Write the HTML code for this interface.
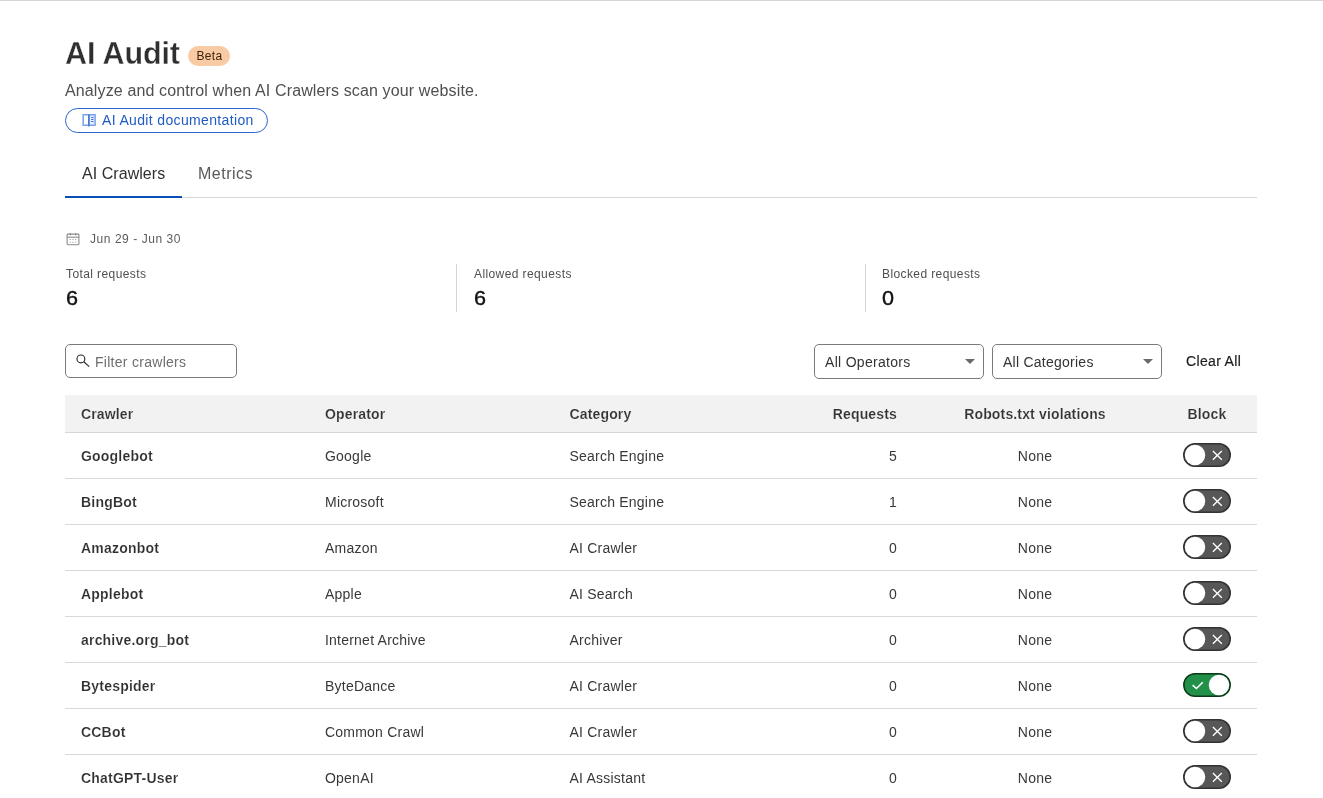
<!DOCTYPE html>
<html>
<head>
<meta charset="utf-8">
<style>
*{box-sizing:border-box;margin:0;padding:0}
html,body{width:1323px;height:798px;overflow:hidden;background:#fff}
body{font-family:"Liberation Sans",sans-serif;color:#313131;position:relative}
.a{position:absolute;white-space:nowrap}
#wrap{position:absolute;left:0;top:0;width:1323px;height:798px;will-change:transform}
.topline{position:absolute;left:0;top:0;width:1323px;height:1px;background:#d6d6d6}
.title{left:65px;top:34.5px;font-size:30.5px;font-weight:bold;color:#2f2f2f;line-height:37px;letter-spacing:-0.12px;-webkit-text-stroke:0.35px #fff}
.beta{left:188px;top:46px;width:42px;height:20px;border-radius:10px;background:#f8cba4;font-size:12px;color:#3f2306;text-align:center;line-height:20px;padding-left:1px;letter-spacing:0.3px}
.sub{left:65px;top:82px;font-size:16px;color:#4f4f4f;line-height:18px;letter-spacing:0.13px}
.docbtn{left:65px;top:108px;width:203px;height:25px;border:1px solid #2b66cf;border-radius:13px}
.doctxt{left:102px;top:112px;font-size:14px;color:#1f5bc6;line-height:16px;letter-spacing:0.35px}
.tabline{left:65px;top:197px;width:1192px;height:1px;background:#d9d9d9}
.tabul{left:65px;top:196px;width:117px;height:2px;background:#0a4fb4}
.tab{top:165px;font-size:16px;line-height:18px}
.date{left:90px;top:232px;font-size:12px;color:#5c5c5c;line-height:14px;letter-spacing:0.55px}
.slabel{font-size:12px;color:#4f4f4f;line-height:14px;top:267px;letter-spacing:0.4px}
.sval{font-size:20px;color:#111;line-height:22px;top:287px;-webkit-text-stroke:0.4px #111;transform:scaleX(1.08);transform-origin:0 0}
.vdiv{position:absolute;top:264px;width:1px;height:48px;background:#d4d4d4}
.box{border:1px solid #7a7a7a;border-radius:5px;background:#fff}
.ph{font-size:14px;line-height:16px}
.arrow{position:absolute;width:0;height:0;border-left:5.5px solid transparent;border-right:5.5px solid transparent;border-top:5.5px solid #6a6a6a}
.hdr{position:absolute;left:65px;top:395px;width:1192px;height:38px;background:#f2f2f2;border-bottom:1px solid #d6d6d6}
.hdr span,.row span{position:absolute;white-space:nowrap;font-size:14px;line-height:16px}
.hdr span{top:11px;font-weight:bold;color:#333;letter-spacing:0.15px;-webkit-text-stroke:0.15px #f2f2f2}
.row{position:absolute;left:65px;width:1192px;height:46px;border-bottom:1px solid #d9d9d9}
.row span{top:15px;color:#383838;letter-spacing:0.22px}
.row .c1{left:16px;font-weight:bold;color:#2f2f2f;letter-spacing:0.2px;-webkit-text-stroke:0.15px #fff}
.c2{left:260px}
.c3{left:504.5px}
.c4{right:360px;text-align:right}
.c5{left:970px;width:0;display:flex;justify-content:center}
.tg{position:absolute;left:1118px;top:10px}
</style>
</head>
<body>
<div id="wrap">
<div class="topline"></div>
<div class="a title">AI Audit</div>
<div class="a beta">Beta</div>
<div class="a sub">Analyze and control when AI Crawlers scan your website.</div>
<div class="a docbtn"></div>
<svg class="a" style="left:82px;top:113px" width="15" height="15" viewBox="0 0 15 15">
  <path d="M1.2 1.8H6.9V12.3H1.2Z" fill="#fff" stroke="#7aa2ef" stroke-width="1.5"/>
  <path d="M6.9 1.8H13.1V12.3H6.9Z" fill="#e4eefd" stroke="#7aa2ef" stroke-width="1.5"/>
  <path d="M6.9 1.6V13.4" stroke="#3a6bd6" stroke-width="1.3"/>
  <path d="M9.2 4.4H11.5M9.2 6.4H11.5M9.2 8.4H11.5" stroke="#3a6bd6" stroke-width="1.05"/>
</svg>
<div class="a doctxt">AI Audit documentation</div>
<div class="a tabline"></div>
<div class="a tabul"></div>
<div class="a tab" style="left:82px;color:#2f2f2f;letter-spacing:0.05px">AI Crawlers</div>
<div class="a tab" style="left:198px;color:#595959;letter-spacing:0.5px">Metrics</div>

<svg class="a" style="left:66px;top:232px" width="14" height="14" viewBox="0 0 14 14">
  <rect x="1.1" y="2.1" width="11.8" height="10.6" rx="0.9" fill="none" stroke="#8a8a8a" stroke-width="1.1"/>
  <path d="M1.1 5.2H12.9" stroke="#8a8a8a" stroke-width="1.1"/>
  <path d="M4.4 1V3.2M9.6 1V3.2" stroke="#8a8a8a" stroke-width="1.1"/>
  <path d="M3.7 7.5h1.1M6.45 7.5h1.1M9.2 7.5h1.1M3.7 10.2h1.1M6.45 10.2h1.1M9.2 10.2h1.1" stroke="#a0a0a0" stroke-width="1.1"/>
</svg>
<div class="a date">Jun 29 - Jun 30</div>

<div class="a slabel" style="left:66px">Total requests</div>
<div class="a sval" style="left:65.8px">6</div>
<div class="vdiv" style="left:456px"></div>
<div class="a slabel" style="left:474px">Allowed requests</div>
<div class="a sval" style="left:474.4px">6</div>
<div class="vdiv" style="left:865px"></div>
<div class="a slabel" style="left:882px">Blocked requests</div>
<div class="a sval" style="left:882.4px">0</div>

<div class="a box" style="left:65px;top:344px;width:172px;height:34px"></div>
<svg class="a" style="left:75px;top:353px" width="16" height="16" viewBox="0 0 16 16">
  <circle cx="5.9" cy="5.9" r="3.9" fill="none" stroke="#2a2a2a" stroke-width="1.15"/>
  <path d="M8.8 8.8L14.2 13.6" stroke="#2a2a2a" stroke-width="1.15"/>
</svg>
<div class="a ph" style="left:95px;top:354px;color:#6e6e6e;letter-spacing:0.28px">Filter crawlers</div>

<div class="a box" style="left:814px;top:344px;width:170px;height:35px"></div>
<div class="a ph" style="left:825px;top:354px;color:#333;letter-spacing:0.3px">All Operators</div>
<i class="arrow" style="left:965px;top:359px"></i>
<div class="a box" style="left:992px;top:344px;width:170px;height:35px"></div>
<div class="a ph" style="left:1003px;top:354px;color:#333;letter-spacing:0.25px">All Categories</div>
<i class="arrow" style="left:1143px;top:359px"></i>
<div class="a ph" style="left:1186px;top:353px;color:#1d1d1d;letter-spacing:0.34px;-webkit-text-stroke:0.2px #1d1d1d">Clear All</div>

<div class="hdr">
  <span style="left:16px">Crawler</span>
  <span class="c2">Operator</span>
  <span class="c3">Category</span>
  <span class="c4">Requests</span>
  <span class="c5">Robots.txt violations</span>
  <span style="left:1142px;width:0;display:flex;justify-content:center">Block</span>
</div>
<div class="row" style="top:433px"><span class="c1">Googlebot</span><span class="c2">Google</span><span class="c3">Search Engine</span><span class="c4">5</span><span class="c5">None</span><svg class="tg" width="48" height="24" viewBox="0 0 48 24"><rect x="0.8" y="0.8" width="46.4" height="22.4" rx="11.2" fill="#575757" stroke="#333" stroke-width="1.6"/><circle cx="12" cy="12" r="10.25" fill="#fff"/><path d="M29.9 7.9L38.8 16.8M38.8 7.9L29.9 16.8" stroke="#fff" stroke-width="1.35" fill="none"/></svg></div>
<div class="row" style="top:479px"><span class="c1">BingBot</span><span class="c2">Microsoft</span><span class="c3">Search Engine</span><span class="c4">1</span><span class="c5">None</span><svg class="tg" width="48" height="24" viewBox="0 0 48 24"><rect x="0.8" y="0.8" width="46.4" height="22.4" rx="11.2" fill="#575757" stroke="#333" stroke-width="1.6"/><circle cx="12" cy="12" r="10.25" fill="#fff"/><path d="M29.9 7.9L38.8 16.8M38.8 7.9L29.9 16.8" stroke="#fff" stroke-width="1.35" fill="none"/></svg></div>
<div class="row" style="top:525px"><span class="c1">Amazonbot</span><span class="c2">Amazon</span><span class="c3">AI Crawler</span><span class="c4">0</span><span class="c5">None</span><svg class="tg" width="48" height="24" viewBox="0 0 48 24"><rect x="0.8" y="0.8" width="46.4" height="22.4" rx="11.2" fill="#575757" stroke="#333" stroke-width="1.6"/><circle cx="12" cy="12" r="10.25" fill="#fff"/><path d="M29.9 7.9L38.8 16.8M38.8 7.9L29.9 16.8" stroke="#fff" stroke-width="1.35" fill="none"/></svg></div>
<div class="row" style="top:571px"><span class="c1">Applebot</span><span class="c2">Apple</span><span class="c3">AI Search</span><span class="c4">0</span><span class="c5">None</span><svg class="tg" width="48" height="24" viewBox="0 0 48 24"><rect x="0.8" y="0.8" width="46.4" height="22.4" rx="11.2" fill="#575757" stroke="#333" stroke-width="1.6"/><circle cx="12" cy="12" r="10.25" fill="#fff"/><path d="M29.9 7.9L38.8 16.8M38.8 7.9L29.9 16.8" stroke="#fff" stroke-width="1.35" fill="none"/></svg></div>
<div class="row" style="top:617px"><span class="c1">archive.org_bot</span><span class="c2">Internet Archive</span><span class="c3">Archiver</span><span class="c4">0</span><span class="c5">None</span><svg class="tg" width="48" height="24" viewBox="0 0 48 24"><rect x="0.8" y="0.8" width="46.4" height="22.4" rx="11.2" fill="#575757" stroke="#333" stroke-width="1.6"/><circle cx="12" cy="12" r="10.25" fill="#fff"/><path d="M29.9 7.9L38.8 16.8M38.8 7.9L29.9 16.8" stroke="#fff" stroke-width="1.35" fill="none"/></svg></div>
<div class="row" style="top:663px"><span class="c1">Bytespider</span><span class="c2">ByteDance</span><span class="c3">AI Crawler</span><span class="c4">0</span><span class="c5">None</span><svg class="tg" width="48" height="24" viewBox="0 0 48 24"><rect x="0.8" y="0.8" width="46.4" height="22.4" rx="11.2" fill="#23904a" stroke="#0a3a18" stroke-width="1.5"/><circle cx="36" cy="12" r="10.25" fill="#fff"/><path d="M9.6 12.1L13.4 15.5L19.8 9.2" stroke="#fff" stroke-width="1.6" fill="none"/></svg></div>
<div class="row" style="top:709px"><span class="c1">CCBot</span><span class="c2">Common Crawl</span><span class="c3">AI Crawler</span><span class="c4">0</span><span class="c5">None</span><svg class="tg" width="48" height="24" viewBox="0 0 48 24"><rect x="0.8" y="0.8" width="46.4" height="22.4" rx="11.2" fill="#575757" stroke="#333" stroke-width="1.6"/><circle cx="12" cy="12" r="10.25" fill="#fff"/><path d="M29.9 7.9L38.8 16.8M38.8 7.9L29.9 16.8" stroke="#fff" stroke-width="1.35" fill="none"/></svg></div>
<div class="row" style="top:755px"><span class="c1">ChatGPT-User</span><span class="c2">OpenAI</span><span class="c3">AI Assistant</span><span class="c4">0</span><span class="c5">None</span><svg class="tg" width="48" height="24" viewBox="0 0 48 24"><rect x="0.8" y="0.8" width="46.4" height="22.4" rx="11.2" fill="#575757" stroke="#333" stroke-width="1.6"/><circle cx="12" cy="12" r="10.25" fill="#fff"/><path d="M29.9 7.9L38.8 16.8M38.8 7.9L29.9 16.8" stroke="#fff" stroke-width="1.35" fill="none"/></svg></div>
</div>
</body>
</html>
